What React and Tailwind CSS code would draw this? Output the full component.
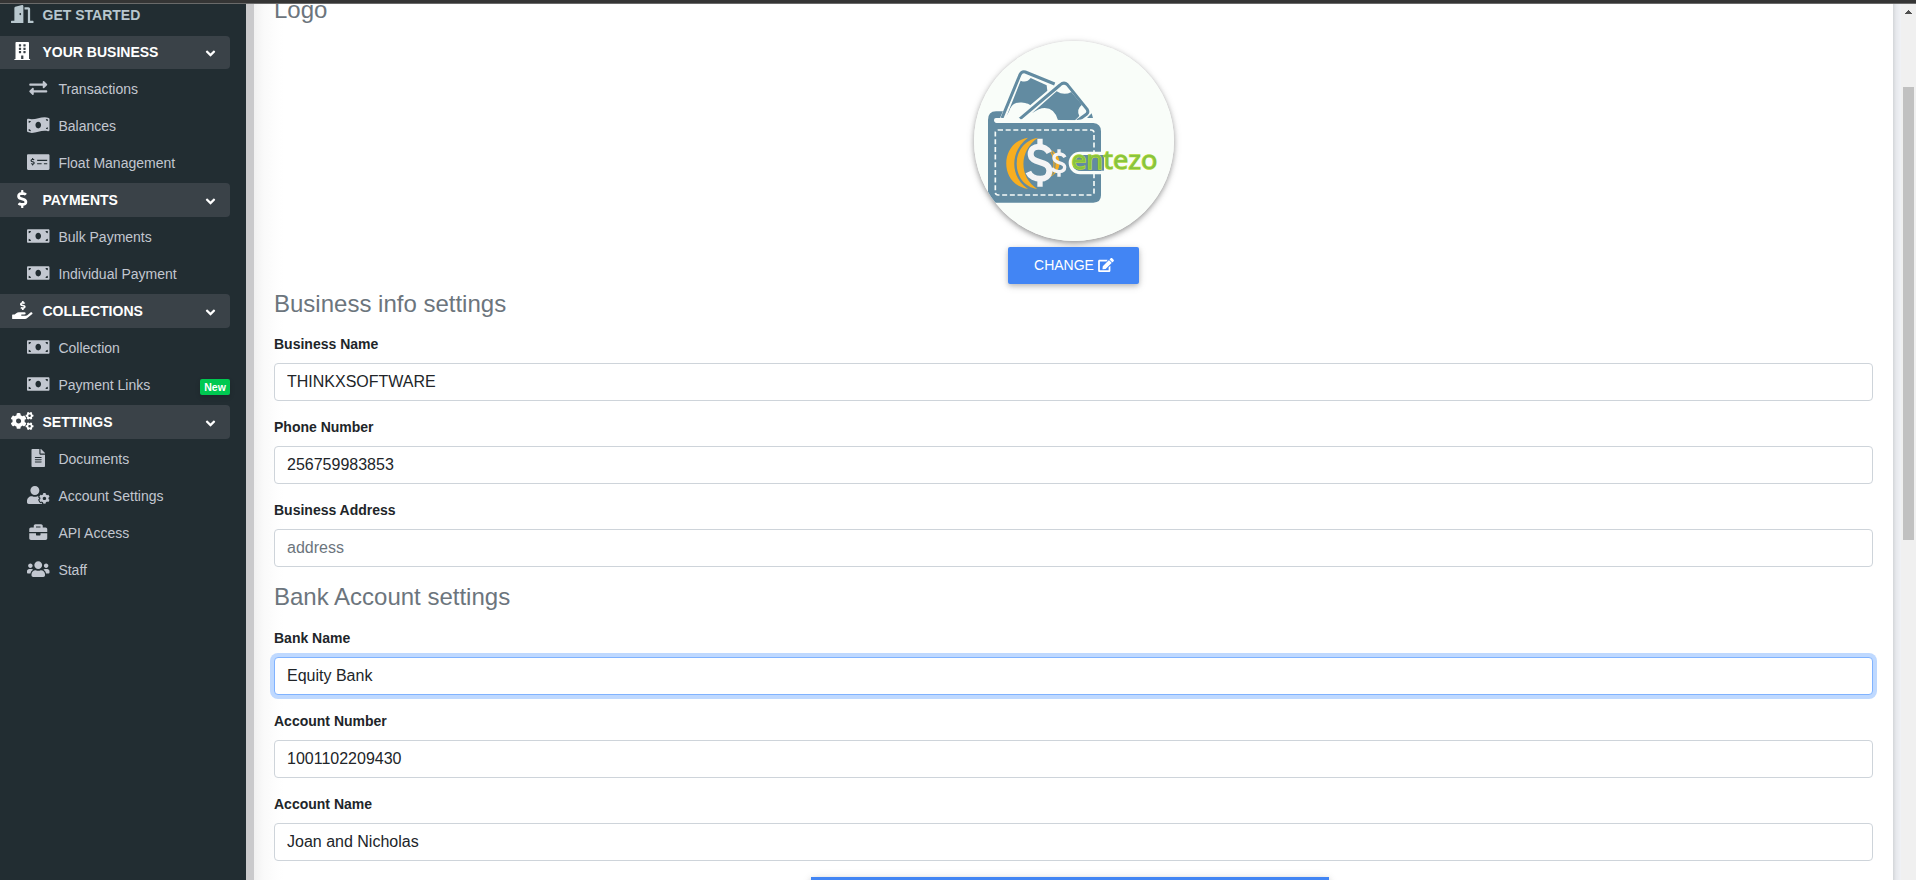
import {
  FaDoorOpen, FaBuilding, FaExchangeAlt, FaMoneyBillWave, FaMoneyCheckAlt, FaDollarSign, FaMoneyBill,
  FaHandHoldingUsd, FaCogs, FaFileAlt, FaUserCog, FaBriefcase, FaUsers, FaEdit, FaAngleDown,
} from 'react-icons/fa';

const sections = [
  {
    title: 'YOUR BUSINESS', icon: FaBuilding, first: true,
    items: [
      { label: 'Transactions', icon: FaExchangeAlt },
      { label: 'Balances', icon: FaMoneyBillWave },
      { label: 'Float Management', icon: FaMoneyCheckAlt },
    ],
  },
  {
    title: 'PAYMENTS', icon: FaDollarSign,
    items: [
      { label: 'Bulk Payments', icon: FaMoneyBill },
      { label: 'Individual Payment', icon: FaMoneyBill },
    ],
  },
  {
    title: 'COLLECTIONS', icon: FaHandHoldingUsd,
    items: [
      { label: 'Collection', icon: FaMoneyBill },
      { label: 'Payment Links', icon: FaMoneyBill, badge: 'New' },
    ],
  },
  {
    title: 'SETTINGS', icon: FaCogs,
    items: [
      { label: 'Documents', icon: FaFileAlt },
      { label: 'Account Settings', icon: FaUserCog },
      { label: 'API Access', icon: FaBriefcase },
      { label: 'Staff', icon: FaUsers },
    ],
  },
];

function SectionRow({ title, icon: Icon, first }) {
  return (
    <div
      className={
        'mb-[3px] flex items-center rounded-r bg-[#3a4248] pr-[12px] font-bold text-white ' +
        (first ? 'mt-px h-[33px]' : 'h-[34px] pt-px')
      }
    >
      <span className="flex w-[42.5px] shrink-0 pl-[11px] pb-[4px]"><Icon className="h-[18px] w-[22.5px] shrink-0" /></span>
      <span className="flex-1">{title}</span>
      <FaAngleDown className="mt-[2px] h-[15px] w-[15px]" />
    </div>
  );
}

function ItemRow({ label, icon: Icon, badge }) {
  return (
    <div className="mb-[3px] flex h-[34px] items-center pt-px text-[#c2c7d0]">
      <span className="flex w-[58.4px] shrink-0 pb-[4px] pl-[27.2px]"><Icon className="h-[18px] w-[22.5px] shrink-0" /></span>
      <span className="flex-1">{label}</span>
      {badge && (
        <span className="mt-[3px] flex h-4 w-[30px] items-center justify-center rounded-[2px] bg-[#00c851] text-[10.5px] font-bold text-white shadow-[0_2px_5px_rgba(0,0,0,0.16)]">
          {badge}
        </span>
      )}
    </div>
  );
}

function Sidebar() {
  return (
    <aside className="h-full w-[246px] shrink-0 overflow-hidden bg-[#222d32] text-[14px] leading-[21px]">
      <nav className="flex w-[230px] flex-col">
        <div className="-mt-[6px] mb-[3px] flex h-[34px] items-center pt-px font-bold text-[#b8c7ce]">
          <span className="flex w-[42.5px] shrink-0 pb-[4px] pl-[11px]"><FaDoorOpen className="h-[18px] w-[22.5px] shrink-0" /></span>
          <span>GET STARTED</span>
        </div>
        {sections.map((s) => (
          <div key={s.title} className="flex flex-col">
            <SectionRow title={s.title} icon={s.icon} first={s.first} />
            {s.items.map((i) => <ItemRow key={i.label} {...i} />)}
          </div>
        ))}
      </nav>
    </aside>
  );
}

function WalletLogo() {
  return (
    <svg viewBox="42 31 600 600" className="size-full">
      <rect x="42" y="31" width="600" height="600" fill="#f9fdf9" />
      <path d="M84 268 Q84 242 108 242 H140 V277 H400 Q423 279 423 302 V494 Q423 516 400 516 H106 Q84 516 84 494 Z" fill="#628ba1" />
      <path d="M381 262 L395 248 L399 262 Z" fill="#628ba1" />
      <path d="M120 262 L176 132 Q185 114 198 120 L290 160 L300 190 L200 262 Z" fill="#f9fdf9" />
      <path d="M126 262 L180 132 Q185 121 196 124 L284 160" fill="none" stroke="#628ba1" strokeWidth="9" />
      <path d="M182 150 Q200 158 212 142 L260 164 L262 180 L205 228 Q160 208 148 240 L140 256 Z" fill="#628ba1" />
      <path d="M148 264 C146 222 165 212 190 216 C205 218 214 222 214 232 L180 264 Z" fill="#f9fdf9" />
      <path d="M168 266 L298 159 Q312 146 326 160 L388 237 Q391 244 384 252 L356 272 Z" fill="#f9fdf9" />
      <path d="M178 266 L300 163 Q312 152 322 162 L382 237 Q386 244 380 250 L352 270" fill="none" stroke="#628ba1" strokeWidth="9" />
      <path d="M290 182 Q312 196 334 184 L366 222 Q348 236 358 256 L345 269 H294 Q284 232 254 232 Q238 232 216 248 Z" fill="#628ba1" />
      <path d="M108 262 H178 L182 266 L345 269 L400 262 V277 H110 Q102 276 102 268 Q102 262 108 262 Z" fill="#f9fdf9" />
      <rect x="106" y="298" width="296" height="195" rx="8" fill="none" stroke="#f5faf7" strokeWidth="5" strokeDasharray="15 8" />
      <path d="M204 321 C117 335 117 462 204 475 C149 440 149 360 204 321 Z" fill="#f8ae20" />
      <path d="M234 321 C149 335 149 462 232 475 C176 440 176 360 234 321 Z" fill="#f8ae20" />
      <path d="M264 352 Q308 374 296 412 Q288 430 272 438 Q292 392 264 352 Z" fill="#f8ae20" />
      <path d="M272 356 Q296 392 278 432" fill="none" stroke="#628ba1" strokeWidth="3" />
      <g fill="none" stroke="#f4f4f5" strokeLinecap="butt">
        <path d="M268 366 C256 343 212 340 212 370 C212 402 268 386 268 420 C268 454 216 450 205 424" strokeWidth="18" />
        <path d="M240 324 V350 M240 444 V468" strokeWidth="16" />
        <path d="M315 380 C308 367 282 366 282 382 C282 401 314 392 314 409 C314 427 286 426 275 413" strokeWidth="10" />
        <path d="M297 356 V373 M297 421 V438" strokeWidth="10" />
      </g>
      <path d="M431 363 H360 A34 34 0 0 0 360 431 H431 V421 H364 A24 24 0 0 1 364 373 H431 Z" fill="#f9fdf9" />
      <rect x="338" y="373" width="92" height="47" rx="20" fill="#628ba1" />
      <rect x="400" y="373" width="32" height="47" fill="#628ba1" />
      <text x="334" y="416" textLength="258" lengthAdjust="spacingAndGlyphs" fill="#86c440" stroke="#b3d834" strokeWidth="4" style={{ paintOrder: 'stroke' }} className="font-['Open_Sans',sans-serif] text-[76px] font-normal">entezo</text>
    </svg>
  );
}

function Field({ label, value, placeholder, focused }) {
  return (
    <div className="mb-4">
      <label className="mb-2 block text-[14px] leading-[21px] font-bold text-[#212529]">{label}</label>
      <input
        readOnly
        value={value}
        placeholder={placeholder}
        className={
          'block h-[38px] w-full rounded border bg-white px-3 text-[16px] text-[#212529] outline-none placeholder:text-[#6c757d] ' +
          (focused ? 'border-[#80b3ff] shadow-[0_0_0_4px_#bfd9ff]' : 'border-[#ced4da]')
        }
      />
    </div>
  );
}

function Heading({ children }) {
  return <h4 className="text-[24px] leading-[28.8px] text-[#6c757d]">{children}</h4>;
}

export default function App() {
  return (
    <div className="flex h-[880px] w-[1916px] flex-col overflow-hidden bg-white font-['Liberation_Sans',Arial,sans-serif]">
      <div className="h-1 shrink-0 border-b border-[#6a6a6a] bg-[#353535]" />
      <div className="flex min-h-0 flex-1">
        <Sidebar />
        <div className="w-2 shrink-0 bg-[#cacacc]" />
        <main className="h-full flex-1 overflow-hidden bg-[linear-gradient(to_right,#f1f1f1_0,#fafafa_10px,#fefefe_24px,#ffffff_30px)] px-5">
          <h4 className="-mt-[8.5px] mb-[16.5px] text-[24px] leading-[28.8px] text-[#6c757d]">Logo</h4>
          <div className="flex h-[249.2px] flex-col items-center">
            <div className="size-[200px] shrink-0 overflow-hidden rounded-full shadow-[0_2px_5px_rgba(0,0,0,0.3),0_2px_8px_rgba(0,0,0,0.16)]">
              <WalletLogo />
            </div>
            <button className="mt-[6.2px] mr-px flex h-[37px] w-[131px] items-center justify-center gap-[4px] rounded-[2px] bg-[#4285f4] pl-[2px] text-[14px] text-white shadow-[0_2px_5px_rgba(0,0,0,0.2),0_2px_10px_rgba(0,0,0,0.12)]">
              CHANGE <FaEdit className="h-[14px] w-[16px]" />
            </button>
          </div>
          <div className="mb-[15.3px]"><Heading>Business info settings</Heading></div>
          <Field label="Business Name" value="THINKXSOFTWARE" />
          <Field label="Phone Number" value="256759983853" />
          <Field label="Business Address" value="" placeholder="address" />
          <div className="mb-4"><Heading>Bank Account settings</Heading></div>
          <Field label="Bank Name" value="Equity Bank" focused />
          <Field label="Account Number" value="1001102209430" />
          <Field label="Account Name" value="Joan and Nicholas" />
          <div className="flex justify-center pr-[7px]">
            <div className="h-10 w-[518px] bg-[#4285f4] shadow-[0_2px_5px_rgba(0,0,0,0.16),0_2px_10px_rgba(0,0,0,0.12)]" />
          </div>
        </main>
        <div className="w-2 shrink-0 bg-[linear-gradient(to_right,#d3d6d9,#e6e8ec_3px,#f0f2f6)]" />
        <div className="flex h-full w-[15px] shrink-0 flex-col items-center bg-[#f0f0f0]">
          <svg viewBox="0 0 7 4" className="mt-[6px] h-1 w-[7px] shrink-0" shapeRendering="crispEdges">
            <path d="M3 0H4V1H5V2H6V3H7V4H0V3H1V2H2V1H3Z" fill="#505050" />
          </svg>
          <div className="mt-[73px] h-[453px] w-[11px] shrink-0 bg-[#c1c1c1]" />
        </div>
      </div>
    </div>
  );
}
